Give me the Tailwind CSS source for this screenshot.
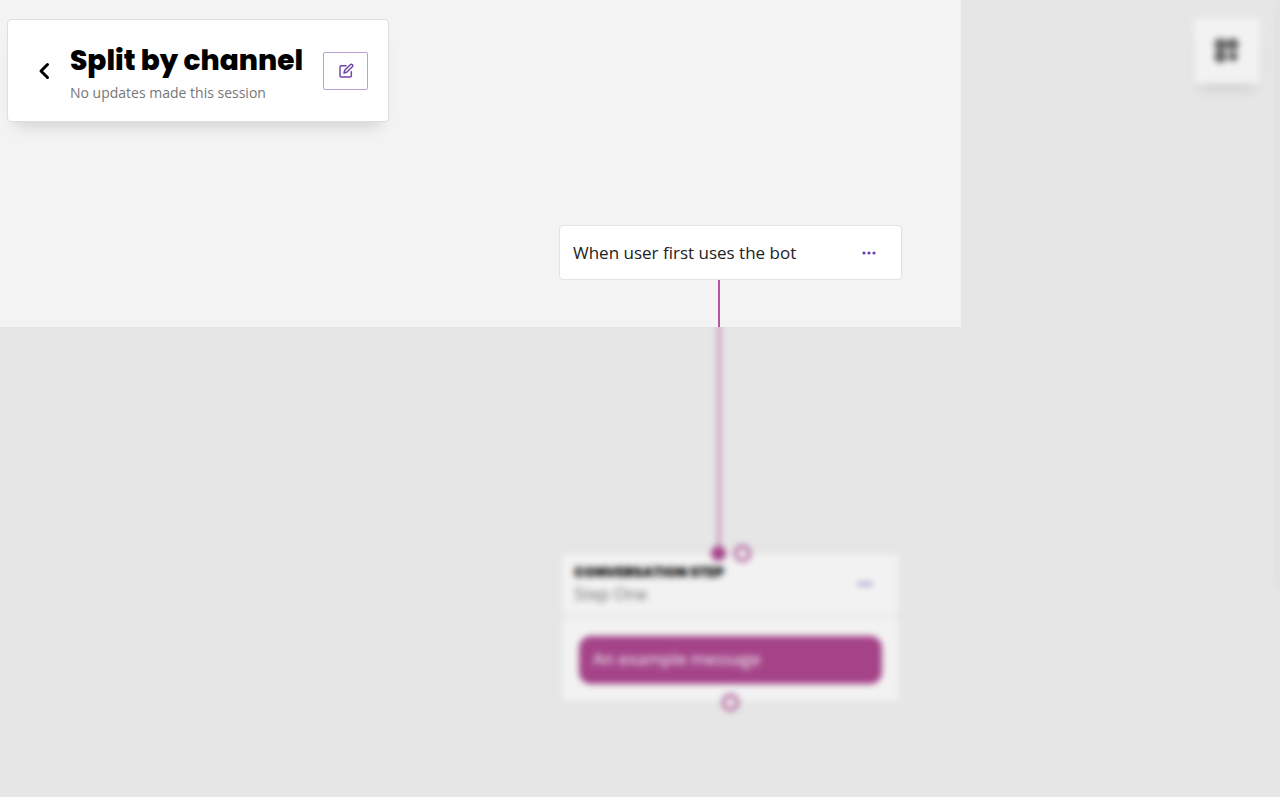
<!DOCTYPE html>
<html lang="en">
<head>
  <meta charset="UTF-8" />
  <meta name="viewport" content="width=device-width, initial-scale=1.0" />
  <title>Split by channel</title>
  <script src="https://cdn.jsdelivr.net/npm/@tailwindcss/browser@4"></script>
</head>
<body class="bg-[#f3f3f3] font-['Open_Sans',sans-serif]">
<div class="relative h-screen overflow-hidden">

  <!-- Toolbar -->
  <header class="flex items-start justify-between pt-[18px] pl-[7px] pr-5">
    <div class="mt-px flex items-center rounded border border-[#dedede] bg-white py-4 pl-7 pr-5 shadow-[0_12px_14px_-8px_rgba(0,0,0,0.14)]">
      <a href="#" aria-label="Back" class="mr-4 block">
        <svg class="size-[18px]" viewBox="0 0 18 18" fill="none" stroke="#000" stroke-width="3" stroke-linecap="round" stroke-linejoin="round">
          <path d="M11.5 2.5 5 9l6.500 6.500" />
        </svg>
      </a>
      <div class="mr-5 pt-[5px]">
        <h1 class="font-[Poppins,Inter,sans-serif] text-[28px] leading-10 font-extrabold text-black">Split by channel</h1>
        <p class="text-sm leading-6 text-[#777]">No updates made this session</p>
      </div>
      <button type="button" aria-label="Edit name" class="flex h-[38px] w-[45px] items-center justify-center rounded-xs border border-[#b8a1da]">
        <svg class="size-4" viewBox="0 0 24 24" fill="none" stroke="#7044ad" stroke-width="2.200" stroke-linecap="round" stroke-linejoin="round">
          <path d="M12 4H5a2 2 0 0 0-2 2v13a2 2 0 0 0 2 2h13a2 2 0 0 0 2-2v-6" />
          <path d="M18.500 2.500a2.100 2.100 0 0 1 3 3L13 14l-4 1 1-4z" />
        </svg>
      </button>
    </div>

    <button type="button" aria-label="Add block" class="flex size-[66px] items-center justify-center rounded bg-white shadow-[0_10px_12px_-6px_rgba(0,0,0,0.14)]">
      <svg class="size-7" viewBox="0 0 28 28" fill="none" stroke="#333" stroke-width="3.500">
        <rect x="4" y="4" width="7" height="7" rx="2" />
        <rect x="16" y="4" width="7" height="7" rx="2" />
        <rect x="4" y="16" width="7" height="7" rx="2" />
        <path d="M20 15v9M15.500 19.500h9" />
      </svg>
    </button>
  </header>

  <!-- Canvas -->
  <div class="absolute top-[280px] left-[718px] h-[274px] w-0.5 bg-[#b8539f]"></div>

  <section class="absolute top-[225px] left-[559px] flex h-[55px] w-[343px] items-center justify-between rounded border border-[#e2e2e2] bg-white pr-6 pl-[13px]">
    <h2 class="text-[17px] text-[#222]">When user first uses the bot</h2>
    <button type="button" aria-label="Trigger options">
      <svg class="h-4 w-4" viewBox="0 0 16 16" fill="#6b3fb0">
        <circle cx="3" cy="8" r="1.600" /><circle cx="8" cy="8" r="1.600" /><circle cx="13" cy="8" r="1.600" />
      </svg>
    </button>
  </section>

  <section class="absolute top-[553px] left-[561px] w-[339px] rounded-sm border border-[#ececec] bg-white">
    <div class="flex items-center justify-between border-b-2 border-[#ececec] pt-2 pr-6 pb-[9px] pl-3">
      <div>
        <h2 class="font-[Poppins,Inter,sans-serif] text-sm leading-5 font-extrabold text-black">CONVERSATION STEP</h2>
        <p class="text-[17px] leading-6 text-[#777]">Step One</p>
      </div>
      <button type="button" aria-label="Step options">
        <svg class="h-4 w-5" viewBox="0 0 20 16" fill="#8f72cc">
          <circle cx="5" cy="8" r="1.900" /><circle cx="10" cy="8" r="1.900" /><circle cx="15" cy="8" r="1.900" />
        </svg>
      </button>
    </div>
    <div class="px-[17px] pt-[19px] pb-[17px]">
      <div class="rounded-xl bg-[#ae4791] px-3.5 pt-[11px] pb-[13px] text-[17px] leading-6 text-white">An example message</div>
    </div>
  </section>

  <!-- Ports -->
  <span class="absolute top-[546px] left-[711px] size-[15px] rounded-full bg-[#ae4791]"></span>
  <span class="absolute top-[545px] left-[734px] size-[17px] rounded-full border-3 border-[#b04c95] bg-white"></span>
  <span class="absolute top-[694px] left-[722px] size-[17px] rounded-full border-3 border-[#b04c95] bg-white"></span>

  <!-- Side drawer edge -->
  <div class="absolute top-0 -right-1 h-[590px] w-[5px] bg-[#f2f2f2] shadow-[0_0_8px_rgba(0,0,0,0.08)]"></div>

  <!-- Focus overlay, leaves the top left clear -->
  <div class="pointer-events-none absolute inset-0 bg-black/5 backdrop-blur-[3px] [clip-path:polygon(961px_0,100%_0,100%_100%,0_100%,0_327px,961px_327px)]"></div>
</div>
</body>
</html>
